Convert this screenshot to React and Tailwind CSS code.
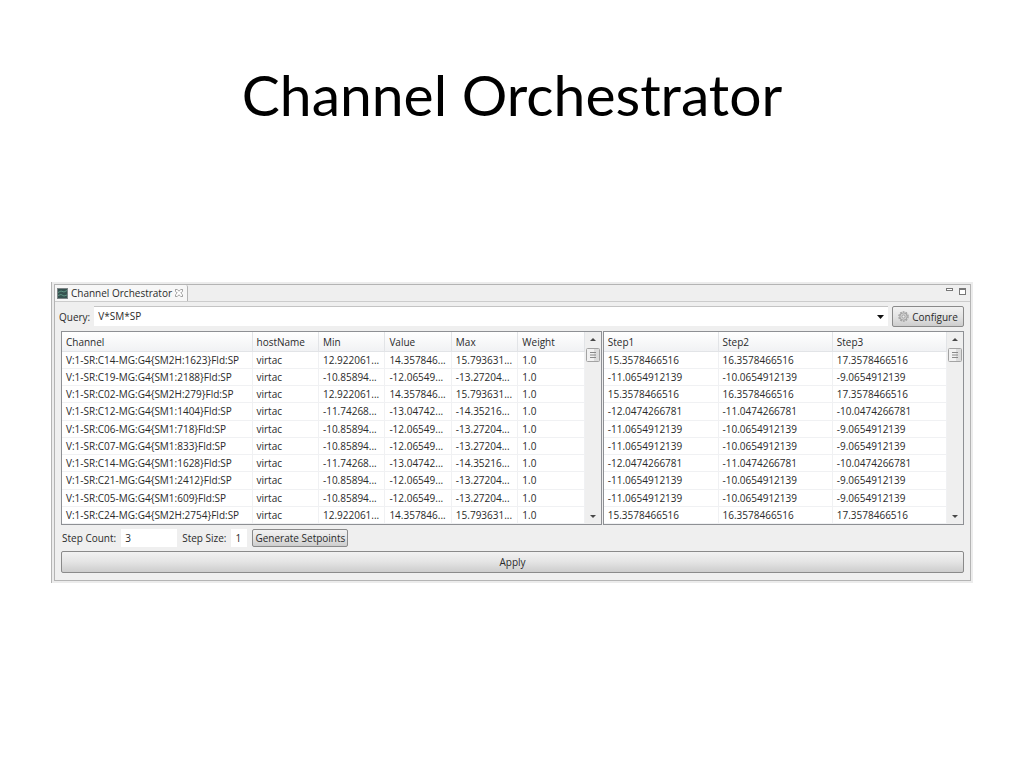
import React, { useState } from "react";

const channels = [
  { name: "V:1-SR:C14-MG:G4{SM2H:1623}Fld:SP", kind: "a" },
  { name: "V:1-SR:C19-MG:G4{SM1:2188}Fld:SP", kind: "b" },
  { name: "V:1-SR:C02-MG:G4{SM2H:279}Fld:SP", kind: "a" },
  { name: "V:1-SR:C12-MG:G4{SM1:1404}Fld:SP", kind: "c" },
  { name: "V:1-SR:C06-MG:G4{SM1:718}Fld:SP", kind: "b" },
  { name: "V:1-SR:C07-MG:G4{SM1:833}Fld:SP", kind: "b" },
  { name: "V:1-SR:C14-MG:G4{SM1:1628}Fld:SP", kind: "c" },
  { name: "V:1-SR:C21-MG:G4{SM1:2412}Fld:SP", kind: "b" },
  { name: "V:1-SR:C05-MG:G4{SM1:609}Fld:SP", kind: "b" },
  { name: "V:1-SR:C24-MG:G4{SM2H:2754}Fld:SP", kind: "a" },
];

const readings = {
  a: {
    range: ["12.922061...", "14.357846...", "15.793631..."],
    steps: ["15.3578466516", "16.3578466516", "17.3578466516"],
  },
  b: {
    range: ["-10.85894...", "-12.06549...", "-13.27204..."],
    steps: ["-11.0654912139", "-10.0654912139", "-9.0654912139"],
  },
  c: {
    range: ["-11.74268...", "-13.04742...", "-14.35216..."],
    steps: ["-12.0474266781", "-11.0474266781", "-10.0474266781"],
  },
};

const channelRows = channels.map(({ name, kind }) => [
  name,
  "virtac",
  ...readings[kind].range,
  "1.0",
]);

const stepRows = channels.map(({ kind }) => readings[kind].steps);

/* ------------------ Icons ------------------ */

const ViewIcon = () => (
  <svg className="h-[11px] w-[11px]" viewBox="0 0 11 11" aria-hidden="true">
    <rect width="11" height="11" fill="#7d8486" />
    <rect x="1" y="1" width="9" height="9" fill="#35524f" />
    <path d="M1 4.500 4 3l3 1 3-1.500M1 7.500l3-1 3 1.500 3-1" stroke="#5f9384" fill="none" />
  </svg>
);

const CloseIcon = () => (
  <svg className="h-[8px] w-[8px]" viewBox="0 0 9 9" aria-hidden="true">
    <path
      d="M.5.5h2l2 2 2-2h2v2l-2 2 2 2v2h-2l-2-2-2 2h-2v-2l2-2-2-2z"
      fill="#fff"
      stroke="#7c7c7c"
      strokeWidth="0.8"
    />
  </svg>
);

const GearIcon = () => (
  <svg className="h-[11px] w-[11px]" viewBox="0 0 11 11" aria-hidden="true">
    <circle cx="5.500" cy="5.500" r="4.600" fill="none" stroke="#a0a0a0" strokeWidth="1.300" strokeDasharray="1.900 1" />
    <circle cx="5.500" cy="5.500" r="3.700" fill="#cfcfcf" stroke="#999" strokeWidth="0.8" />
    <circle cx="5.500" cy="5.500" r="1.500" fill="#ececec" stroke="#999" strokeWidth="0.8" />
  </svg>
);

const Arrow = ({ down }) => (
  <svg className="h-[3px] w-[6px]" viewBox="0 0 6 3" aria-hidden="true">
    <path d={down ? "M0 0h6L3 3z" : "M0 3h6L3 0z"} fill="#484848" />
  </svg>
);

/* ------------------ Table ------------------ */

const ScrollBar = () => (
  <div className="flex w-4 shrink-0 flex-col items-center justify-between bg-[#efefef] py-[6px]">
    <div className="flex flex-col items-center gap-[7px]">
      <Arrow />
      <svg className="h-[14px] w-[14px]" viewBox="0 0 14 14" aria-hidden="true">
        <rect x=".5" y=".5" width="13" height="13" rx="1" fill="#f1f1f1" stroke="#a3a3a3" />
        <path d="M8 1h5v12H8z" fill="#dcdcdc" />
        <path d="M4 4.500h6M4 7h6M4 9.500h6" stroke="#888" />
      </svg>
    </div>
    <Arrow down />
  </div>
);

const DataTable = ({ label, columns, rows, firstWidth = "", className }) => (
  <div className={`flex min-w-0 border border-[#8e9094] bg-white ${className}`}>
    <table aria-label={label} className="h-[192px] w-full min-w-0 flex-1 table-fixed border-collapse">
      <thead>
        <tr className="h-[19px] bg-linear-to-b from-white to-[#f1f2f4]">
          {columns.map((column, i) => (
            <th
              key={column}
              className={`border-r border-b border-[#e2e4e7] p-0 pt-px pl-1 text-left font-normal ${i === 0 ? firstWidth : ""}`}
            >
              {column}
            </th>
          ))}
        </tr>
      </thead>
      <tbody>
        {rows.map((row, i) => (
          <tr key={i}>
            {row.map((cell, j) => (
              <td
                key={j}
                className="overflow-hidden border-r border-b border-[#f0f1f3] p-0 pl-1 whitespace-nowrap"
              >
                {cell}
              </td>
            ))}
          </tr>
        ))}
      </tbody>
    </table>
    <ScrollBar />
  </div>
);

const buttonStyle =
  "rounded-[2px] border border-[#8a8a8a] bg-linear-to-b from-[#f2f2f2] via-[#e4e4e4] to-[#cdcdcd]";

const App = () => {
  const [query, setQuery] = useState("V*SM*SP");
  const [stepCount, setStepCount] = useState("3");
  const [stepSize, setStepSize] = useState("1");

  return (
    <main className="min-h-screen bg-white px-[51px] pt-[58px] pb-10">
      <h1 className="text-center font-[Lato,sans-serif] text-[57px] leading-[72px] text-black">
        Channel Orchestrator
      </h1>

      <section className="mt-[152px] border-l border-[#b5b5b5] bg-[#ececec] p-[2px] font-['Open_Sans',sans-serif] text-[10px] leading-4 text-[#2a2a2a]">
        <div className="border border-[#b4b4b4] bg-[#efefef]">

          {/* TAB BAR */}
          <div className="flex h-[17px] items-stretch justify-between border-b border-[#cccccc]">
            <div className="flex items-center gap-[3px] rounded-tr-[2px] border-r border-[#b4b4b4] bg-[#f7f7f7] pr-1 pl-[2px]">
              <ViewIcon />
              <h2>Channel Orchestrator</h2>
              <button type="button" aria-label="Close">
                <CloseIcon />
              </button>
            </div>
            <div className="flex items-start gap-[6px] pt-[3px] pr-1">
              <button type="button" aria-label="Minimize" className="h-[3px] w-[7px] border border-[#777] bg-white" />
              <button type="button" aria-label="Maximize" className="h-[7px] w-[7px] border border-t-2 border-[#777] bg-white" />
            </div>
          </div>

          <div className="pt-[4px] pr-[6px] pb-[7px] pl-1">

            {/* QUERY */}
            <div className="flex items-end gap-1">
              <label htmlFor="query" className="self-center">Query:</label>
              <div className="relative flex-1 self-start">
                <select
                  id="query"
                  value={query}
                  onChange={(e) => setQuery(e.target.value)}
                  className="block h-5 w-full appearance-none border-t border-[#c4c4c4] bg-white pb-px pl-1"
                >
                  <option>V*SM*SP</option>
                </select>
                <svg className="pointer-events-none absolute top-[9px] right-1 h-[4px] w-[7px]" viewBox="0 0 7 4" aria-hidden="true">
                  <path d="M0 0h7L3.500 4z" fill="#111" />
                </svg>
              </div>
              <button type="button" className={`flex h-[21px] w-[72px] items-center justify-center gap-[3px] ${buttonStyle}`}>
                <GearIcon />
                Configure
              </button>
            </div>

            <div className="pl-[2px]">

              {/* TABLES */}
              <div className="mt-1 flex gap-px">
                <DataTable
                  label="Channels"
                  className="flex-3"
                  firstWidth="w-[190px]"
                  columns={["Channel", "hostName", "Min", "Value", "Max", "Weight"]}
                  rows={channelRows}
                />
                <DataTable
                  label="Steps"
                  className="flex-2"
                  columns={["Step1", "Step2", "Step3"]}
                  rows={stepRows}
                />
              </div>

              {/* STEPS */}
              <div className="mt-1 flex items-center gap-[5px] pl-px">
                <label htmlFor="step-count">Step Count:</label>
                <input
                  id="step-count"
                  value={stepCount}
                  onChange={(e) => setStepCount(e.target.value)}
                  className="h-[18px] w-14 bg-white pl-1"
                />
                <label htmlFor="step-size">Step Size:</label>
                <input
                  id="step-size"
                  value={stepSize}
                  onChange={(e) => setStepSize(e.target.value)}
                  className="h-[18px] w-4 bg-white pl-1"
                />
                <button type="button" className={`flex h-[18px] items-center px-[2px] ${buttonStyle}`}>
                  Generate Setpoints
                </button>
              </div>

              <button type="button" className={`mt-1 block h-[22px] w-full ${buttonStyle}`}>
                Apply
              </button>
            </div>
          </div>
        </div>
      </section>
    </main>
  );
};

export default App;
